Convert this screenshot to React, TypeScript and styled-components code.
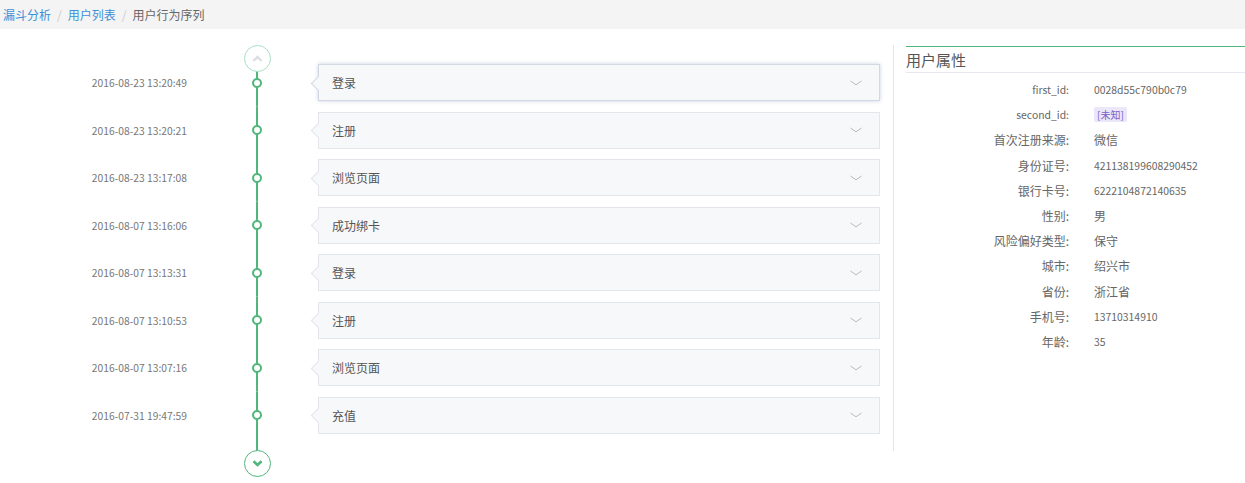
import React from "react";
import styled, { createGlobalStyle } from "styled-components";

const GREEN = "#50b67c";
const FONT = `"Noto Sans CJK SC", "Noto Sans", sans-serif`;

const GlobalStyle = createGlobalStyle`
  html, body {
    margin: 0;
    padding: 0;
    background: #fff;
    font-family: ${FONT};
  }
`;

const Page = styled.div`
  width: 1245px;
  height: 483px;
  overflow: hidden;
  background: #fff;
`;

const Breadcrumb = styled.div`
  height: 29px;
  background: #f4f4f4;
  display: flex;
  align-items: center;
  padding-left: 3px;
  font-size: 12px;
`;

const Crumb = styled.span<{ $current?: boolean }>`
  color: ${({ $current }) => ($current ? "#666" : "#3d8fd9")};
`;

const Sep = styled.span`
  color: #ccc;
  padding: 0 6px;
`;

const Main = styled.div`
  display: flex;
`;

const TimelinePanel = styled.div`
  width: 893px;
  padding-top: 16px;
`;

const Row = styled.div`
  display: grid;
  grid-template-columns: 196px 122px 562px;
  align-items: center;
`;

const EventRow = styled(Row)`
  height: 47.5px;
`;

const Time = styled.div`
  text-align: right;
  padding-right: 9px;
  font-size: 10.3px;
  color: #777;
`;

const Axis = styled.div<{ $line?: "full" | "top" | "none" }>`
  height: 100%;
  display: flex;
  align-items: center;
  justify-content: center;
  background: ${({ $line }) =>
    $line === "none"
      ? "none"
      : `linear-gradient(${GREEN}, ${GREEN}) center ${
          $line === "top" ? "top" : "center"
        } / 2px ${$line === "top" ? "12px" : "100%"} no-repeat`};
`;

const Dot = styled.span`
  width: 6px;
  height: 6px;
  border-radius: 50%;
  border: 2px solid ${GREEN};
  background: #fff;
`;

const NavButton = styled.button<{ $active?: boolean }>`
  position: relative;
  z-index: 1;
  width: 27px;
  height: 27px;
  padding: 0;
  border-radius: 50%;
  border: 1px solid ${({ $active }) => ($active ? GREEN : "#a6e0c3")};
  background: #fff;
  display: flex;
  align-items: center;
  justify-content: center;
  cursor: pointer;
`;

const TopNav = styled(Row)`
  margin-bottom: -13px;
  position: relative;
  z-index: 1;
`;

const BottomNav = styled(Row)`
  height: 38px;
  align-items: end;
`;

const BottomAxis = styled(Axis)`
  align-items: flex-end;
`;

const Card = styled.div<{ $hover?: boolean }>`
  position: relative;
  height: 37px;
  box-sizing: border-box;
  display: flex;
  align-items: center;
  justify-content: space-between;
  padding: 0 17px 0 13px;
  background: #f7f8fa;
  border: 1px solid ${({ $hover }) => ($hover ? "#d3d9e4" : "#e3e6eb")};
  box-shadow: ${({ $hover }) =>
    $hover ? "0 0 4px rgba(140, 155, 190, 0.45)" : "none"};
  font-size: 12px;
  color: #555;

  &::before {
    content: "";
    position: absolute;
    left: -6px;
    top: 50%;
    width: 10px;
    height: 10px;
    margin-top: -5px;
    background: #f7f8fa;
    border-left: 1px solid ${({ $hover }) => ($hover ? "#d3d9e4" : "#e3e6eb")};
    border-bottom: 1px solid ${({ $hover }) => ($hover ? "#d3d9e4" : "#e3e6eb")};
    transform: rotate(45deg);
  }
`;

const AttrPanel = styled.div`
  flex: 1;
  margin-top: 16px;
  height: 406px;
  border-left: 1px solid #e6e6e6;
  padding-left: 12px;
`;

const AttrHeader = styled.div`
  margin-top: 1px;
  border-top: 1px solid ${GREEN};
  border-bottom: 1px solid #e6e8f0;
  height: 25px;
  display: flex;
  align-items: center;
  font-size: 15px;
  color: #555;
`;

const AttrList = styled.div`
  padding-top: 4px;
`;

const AttrRow = styled.div`
  display: grid;
  grid-template-columns: 163px 1fr;
  column-gap: 25px;
  height: 25.2px;
  align-items: center;
  color: #666;
`;

const AttrLabel = styled.div<{ $cjk?: boolean }>`
  text-align: right;
  font-size: ${({ $cjk }) => ($cjk ? "12px" : "10.4px")};
`;

const AttrValue = styled.div<{ $cjk?: boolean }>`
  font-size: ${({ $cjk }) => ($cjk ? "12px" : "10.4px")};
`;

const Tag = styled.span`
  display: inline-block;
  background: #ebe7f9;
  color: #7a62c9;
  font-size: 10px;
  line-height: 15px;
  padding: 0 3px;
  border-radius: 2px;
`;

const Chevron = ({ color = "#bbb" }: { color?: string }) => (
  <svg width="12" height="6" viewBox="0 0 12 6">
    <path d="M0.5 1 L6 4.8 L11.5 1" fill="none" stroke={color} strokeWidth="1" />
  </svg>
);

const events = [
  { time: "2016-08-23 13:20:49", name: "登录" },
  { time: "2016-08-23 13:20:21", name: "注册" },
  { time: "2016-08-23 13:17:08", name: "浏览页面" },
  { time: "2016-08-07 13:16:06", name: "成功绑卡" },
  { time: "2016-08-07 13:13:31", name: "登录" },
  { time: "2016-08-07 13:10:53", name: "注册" },
  { time: "2016-08-07 13:07:16", name: "浏览页面" },
  { time: "2016-07-31 19:47:59", name: "充值" },
];

const attrs: { label: string; value: string; tag?: boolean; cjkLabel?: boolean; cjkValue?: boolean }[] = [
  { label: "first_id:", value: "0028d55c790b0c79" },
  { label: "second_id:", value: "[未知]", tag: true },
  { label: "首次注册来源:", value: "微信", cjkLabel: true, cjkValue: true },
  { label: "身份证号:", value: "421138199608290452", cjkLabel: true },
  { label: "银行卡号:", value: "6222104872140635", cjkLabel: true },
  { label: "性别:", value: "男", cjkLabel: true, cjkValue: true },
  { label: "风险偏好类型:", value: "保守", cjkLabel: true, cjkValue: true },
  { label: "城市:", value: "绍兴市", cjkLabel: true, cjkValue: true },
  { label: "省份:", value: "浙江省", cjkLabel: true, cjkValue: true },
  { label: "手机号:", value: "13710314910", cjkLabel: true },
  { label: "年龄:", value: "35", cjkLabel: true },
];

const App = () => {
  return (
    <Page>
      <GlobalStyle />
      <Breadcrumb>
        <Crumb>漏斗分析</Crumb>
        <Sep>/</Sep>
        <Crumb>用户列表</Crumb>
        <Sep>/</Sep>
        <Crumb $current>用户行为序列</Crumb>
      </Breadcrumb>
      <Main>
        <TimelinePanel>
          <TopNav>
            <span />
            <Axis $line="none">
              <NavButton>
                <svg width="11" height="7" viewBox="0 0 11 7">
                  <path d="M1.5 6 L5.5 2 L9.5 6" fill="none" stroke="#dcdde2" strokeWidth="2.4" />
                </svg>
              </NavButton>
            </Axis>
            <span />
          </TopNav>
          {events.map((e, i) => (
            <EventRow key={i}>
              <Time>{e.time}</Time>
              <Axis $line="full">
                <Dot />
              </Axis>
              <Card $hover={i === 0}>
                <span>{e.name}</span>
                <Chevron />
              </Card>
            </EventRow>
          ))}
          <BottomNav>
            <span />
            <BottomAxis $line="top">
              <NavButton $active>
                <svg width="11" height="7" viewBox="0 0 11 7">
                  <path d="M1.5 1.2 L5.5 5 L9.5 1.2" fill="none" stroke={GREEN} strokeWidth="2.6" />
                </svg>
              </NavButton>
            </BottomAxis>
            <span />
          </BottomNav>
        </TimelinePanel>
        <AttrPanel>
          <AttrHeader>用户属性</AttrHeader>
          <AttrList>
            {attrs.map((a) => (
              <AttrRow key={a.label}>
                <AttrLabel $cjk={a.cjkLabel}>{a.label}</AttrLabel>
                <AttrValue $cjk={a.cjkValue}>
                  {a.tag ? <Tag>{a.value}</Tag> : a.value}
                </AttrValue>
              </AttrRow>
            ))}
          </AttrList>
        </AttrPanel>
      </Main>
    </Page>
  );
};

export default App;
